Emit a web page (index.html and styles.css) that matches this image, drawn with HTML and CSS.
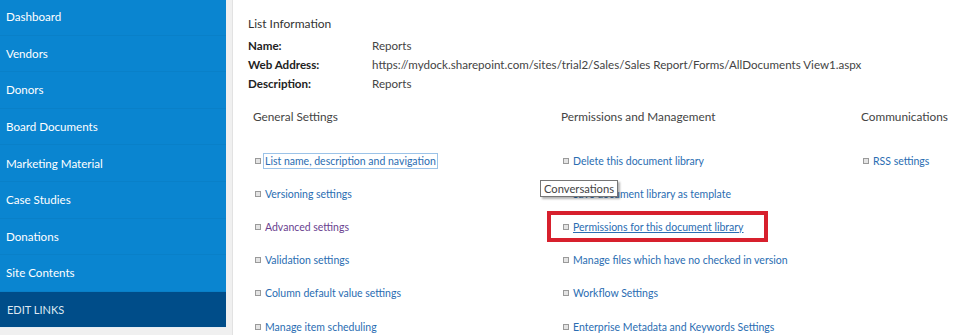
FILE: index.html
```html
<!DOCTYPE html>
<html lang="en">
<head>
    <meta charset="UTF-8">
    <title>Settings</title>
    <link rel="stylesheet" href="styles.css">
</head>
<body>
<div class="page">
    <nav class="quick-launch">
        <a href="#" class="nav-item">Dashboard</a>
        <a href="#" class="nav-item">Vendors</a>
        <a href="#" class="nav-item">Donors</a>
        <a href="#" class="nav-item">Board Documents</a>
        <a href="#" class="nav-item">Marketing Material</a>
        <a href="#" class="nav-item">Case Studies</a>
        <a href="#" class="nav-item">Donations</a>
        <a href="#" class="nav-item">Site Contents</a>
        <a href="#" class="nav-item edit-links">EDIT LINKS</a>
    </nav>
    <div class="gutter"></div>
    <main class="content">
        <h2 class="info-title">List Information</h2>
        <div class="info-table">
            <div class="info-label">Name:</div>
            <div class="info-value">Reports</div>
            <div class="info-label">Web Address:</div>
            <div class="info-value">https://mydock.sharepoint.com/sites/trial2/Sales/Sales Report/Forms/AllDocuments View1.aspx</div>
            <div class="info-label">Description:</div>
            <div class="info-value">Reports</div>
        </div>

        <div class="settings">
            <section class="settings-col">
                <h3>General Settings</h3>
                <ul>
                    <li><a href="#" class="focused">List name, description and navigation</a></li>
                    <li><a href="#">Versioning settings</a></li>
                    <li><a href="#" class="visited">Advanced settings</a></li>
                    <li><a href="#">Validation settings</a></li>
                    <li><a href="#">Column default value settings</a></li>
                    <li><a href="#">Manage item scheduling</a></li>
                </ul>
            </section>
            <section class="settings-col">
                <h3>Permissions and Management</h3>
                <ul>
                    <li><a href="#">Delete this document library</a></li>
                    <li class="has-tip"><a href="#">Save document library as template</a><span class="tooltip">Conversations</span></li>
                    <li class="marked"><a href="#" class="hover">Permissions for this document library</a></li>
                    <li><a href="#">Manage files which have no checked in version</a></li>
                    <li><a href="#">Workflow Settings</a></li>
                    <li><a href="#">Enterprise Metadata and Keywords Settings</a></li>
                </ul>
            </section>
            <section class="settings-col">
                <h3>Communications</h3>
                <ul>
                    <li><a href="#">RSS settings</a></li>
                </ul>
            </section>
        </div>
    </main>
</div>
</body>
</html>
```

FILE: styles.css
```css
body {
    margin: 0;
    font-family: Lato, 'Open Sans', sans-serif;
    background: #f0f0f0;
    overflow: hidden;
}
.page {
    display: flex;
    width: 959px;
    height: 335px;
    overflow: hidden;
}

/* Left navigation */
.quick-launch {
    width: 226px;
    flex-shrink: 0;
    align-self: flex-start;
    margin-top: -1px;
    background: #0a85d0;
    display: flex;
    flex-direction: column;
}
.nav-item {
    height: 36.6px;
    box-sizing: border-box;
    display: flex;
    align-items: center;
    padding-left: 6px;
    color: #fff;
    font-size: 11.6px;
    text-decoration: none;
    border-bottom: 1px solid rgba(0, 0, 0, 0.035);
}
.edit-links {
    background: #004d89;
    color: #dde8f2;
    font-size: 11px;
    padding-left: 7px;
    border-bottom: 1px solid #e6eef5;
}
.gutter {
    width: 6px;
    flex-shrink: 0;
    border-right: 1px solid #e2e2e2;
}

/* Main area */
.content {
    flex: 1;
    background: #fff;
    padding: 16px 0 0 15px;
    color: #444;
    position: relative;
}
.info-title {
    margin: 0 0 5px;
    font-size: 12px;
    font-weight: normal;
    color: #333;
}
.info-table {
    display: grid;
    grid-template-columns: 124px auto;
    font-size: 11.6px;
    line-height: 19px;
}
.info-label {
    font-weight: bold;
    color: #222;
}
.info-value {
    color: #444;
}

.settings {
    display: grid;
    grid-template-columns: 308px 300px auto;
    margin-top: 15px;
    padding-left: 5px;
}
.settings-col h3 {
    margin: 0;
    font-size: 11.8px;
    font-weight: normal;
    color: #444;
    line-height: 18px;
}
.settings-col ul {
    list-style: none;
    margin: 18px 0 0;
    padding: 0;
}
.settings-col li {
    position: relative;
    height: 33.2px;
    display: flex;
    align-items: center;
    padding-left: 2px;
    font-size: 10.5px;
}
.settings-col li::before {
    content: '';
    width: 4px;
    height: 4px;
    border: 1px solid #9a9a9a;
    background: #e4e4e4;
    margin-right: 2px;
    flex-shrink: 0;
}
.settings-col li a {
    color: #2a6db2;
    text-decoration: none;
    padding: 1px;
    border: 1px solid transparent;
}
.settings-col li a.visited {
    color: #6a3f8f;
}
.settings-col li a.focused {
    border-color: #9cc3e8;
}
.settings-col li a.hover {
    text-decoration: underline;
}

/* Red annotation around the permissions link */
.marked::after {
    content: '';
    position: absolute;
    left: -14px;
    top: 1px;
    width: 213px;
    height: 23px;
    border: 4px solid #d7202d;
}

/* Tooltip shown over the template link */
.tooltip {
    position: absolute;
    left: -21px;
    top: 3px;
    padding: 1px 3px;
    background: #fff;
    border: 1px solid #767676;
    box-shadow: 2px 2px 2px rgba(0, 0, 0, 0.3);
    color: #444;
    font-size: 11.2px;
    line-height: 13px;
}
```
